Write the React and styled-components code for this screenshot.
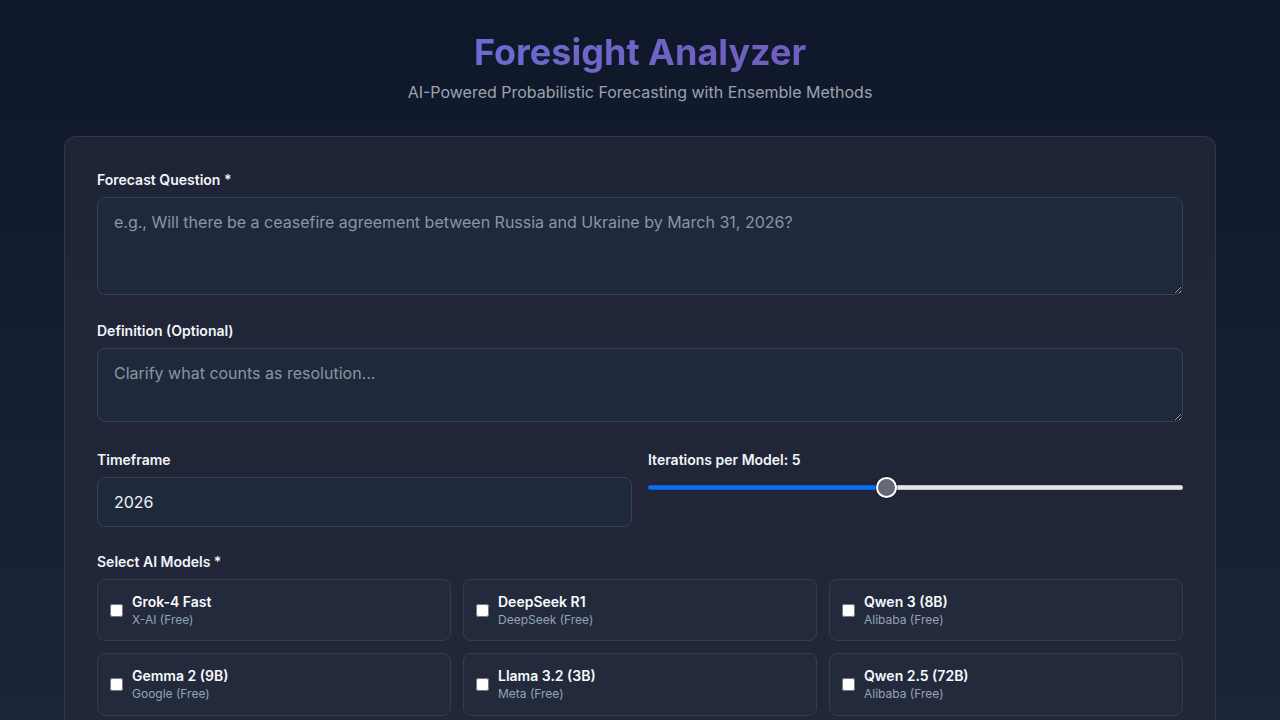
import React, { useState } from "react";
import styled, { createGlobalStyle } from "styled-components";

const GlobalStyle = createGlobalStyle`
  * { box-sizing: border-box; }
  body {
    margin: 0;
    font-family: Inter, "Noto Sans", sans-serif;
    background: linear-gradient(180deg, #0f172a 0%, #1b253a 100%) fixed;
    color: #e2e8f0;
    min-height: 100vh;
  }
`;

const MODELS = [
  { id: "grok", name: "Grok-4 Fast", vendor: "X-AI (Free)" },
  { id: "deepseek", name: "DeepSeek R1", vendor: "DeepSeek (Free)" },
  { id: "qwen3", name: "Qwen 3 (8B)", vendor: "Alibaba (Free)" },
  { id: "gemma", name: "Gemma 2 (9B)", vendor: "Google (Free)" },
  { id: "llama", name: "Llama 3.2 (3B)", vendor: "Meta (Free)" },
  { id: "qwen25", name: "Qwen 2.5 (72B)", vendor: "Alibaba (Free)" },
];

const App = () => {
  const [iterations, setIterations] = useState(5);
  const [timeframe, setTimeframe] = useState("2026");
  const [selected, setSelected] = useState([]);

  const fill = ((iterations - 1) / 9) * 100;

  const toggle = (id) =>
    setSelected((s) => (s.includes(id) ? s.filter((x) => x !== id) : [...s, id]));

  return (
    <>
      <GlobalStyle />
      <Page>
        <Header>
          <Title>Foresight Analyzer</Title>
          <Subtitle>AI-Powered Probabilistic Forecasting with Ensemble Methods</Subtitle>
        </Header>

        <Card>
          <Field $space={26}>
            <Label>Forecast Question *</Label>
            <TextArea
              rows={3}
              placeholder="e.g., Will there be a ceasefire agreement between Russia and Ukraine by March 31, 2026?"
            />
          </Field>

          <Field $space={28}>
            <Label>Definition (Optional)</Label>
            <TextArea rows={2} placeholder="Clarify what counts as resolution..." />
          </Field>

          <TwoCol>
            <div>
              <Label>Timeframe</Label>
              <Input value={timeframe} onChange={(e) => setTimeframe(e.target.value)} />
            </div>
            <div>
              <Label>Iterations per Model: {iterations}</Label>
              <Range
                type="range"
                min={1}
                max={10}
                value={iterations}
                onChange={(e) => setIterations(Number(e.target.value))}
                style={{
                  background: `linear-gradient(90deg, #0a72f0 0%, #0a72f0 ${fill}%, #e6e6e8 ${fill}%, #e6e6e8 100%)`,
                }}
              />
            </div>
          </TwoCol>

          <Field>
            <Label>Select AI Models *</Label>
            <ModelGrid>
              {MODELS.map((m) => (
                <ModelCard key={m.id}>
                  <CheckBox
                    type="checkbox"
                    checked={selected.includes(m.id)}
                    onChange={() => toggle(m.id)}
                  />
                  <ModelText>
                    <ModelName>{m.name}</ModelName>
                    <ModelVendor>{m.vendor}</ModelVendor>
                  </ModelText>
                </ModelCard>
              ))}
            </ModelGrid>
          </Field>

          <SubmitButton>Run Forecast</SubmitButton>
        </Card>
      </Page>
    </>
  );
};

const Page = styled.div`
  max-width: 1152px;
  margin: 0 auto;
  padding: 31px 0 40px;
`;

const Header = styled.header`
  text-align: center;
  margin-bottom: 32px;
`;

const Title = styled.h1`
  margin: 0 0 6px;
  font-size: 36px;
  line-height: 43px;
  font-weight: 700;
  background: linear-gradient(135deg, #667eea 0%, #764ba2 100%);
  -webkit-background-clip: text;
  background-clip: text;
  color: transparent;
`;

const Subtitle = styled.p`
  margin: 0;
  font-size: 16px;
  line-height: 24px;
  color: #9ca3af;
`;

const Card = styled.div`
  background: rgba(36, 40, 58, 0.75);
  border: 1px solid #323a4c;
  border-radius: 12px;
  padding: 33px 32px 32px;
`;

const Field = styled.div`
  margin-bottom: ${(p) => p.$space || 25}px;
`;

const Label = styled.label`
  display: block;
  font-size: 14px;
  line-height: 20px;
  font-weight: 600;
  color: #f1f5f9;
  margin-bottom: 7px;
`;

const TextArea = styled.textarea`
  display: block;
  width: 100%;
  padding: 12px 16px;
  font-family: Inter, "Noto Sans", sans-serif;
  font-size: 16px;
  line-height: 24px;
  color: #e2e8f0;
  background: #1e293b;
  border: 1px solid #364152;
  border-radius: 8px;
  resize: vertical;
  outline: none;

  &::placeholder {
    color: #8b95a5;
  }
`;

const Input = styled.input`
  display: block;
  width: 100%;
  padding: 12px 16px;
  font-family: Inter, "Noto Sans", sans-serif;
  font-size: 16px;
  line-height: 24px;
  color: #f1f5f9;
  background: #1e293b;
  border: 1px solid #364152;
  border-radius: 8px;
  outline: none;
`;

const TwoCol = styled.div`
  display: grid;
  grid-template-columns: 1fr 1fr;
  gap: 16px;
  margin-bottom: 25px;
`;

const Range = styled.input`
  -webkit-appearance: none;
  appearance: none;
  display: block;
  width: 100%;
  height: 5px;
  margin: 15px 0 0;
  border-radius: 3px;
  box-shadow: inset 0 0 0 1px rgba(0, 0, 0, 0.15);
  outline: none;

  &::-webkit-slider-thumb {
    -webkit-appearance: none;
    width: 21px;
    height: 21px;
    border-radius: 50%;
    background: #676876;
    border: 2px solid #ffffff;
    box-shadow: 0 0 0 1px rgba(0, 0, 0, 0.3);
    cursor: pointer;
  }
`;

const ModelGrid = styled.div`
  display: grid;
  grid-template-columns: repeat(3, 1fr);
  gap: 12px;
`;

const ModelCard = styled.label`
  display: flex;
  align-items: center;
  gap: 9px;
  padding: 12px;
  background: #222a3c;
  border: 1px solid #343c4e;
  border-radius: 8px;
  cursor: pointer;
`;

const CheckBox = styled.input`
  width: 13px;
  height: 13px;
  margin: 0;
  flex-shrink: 0;
`;

const ModelText = styled.div`
  display: flex;
  flex-direction: column;
`;

const ModelName = styled.span`
  font-size: 14px;
  line-height: 1.4;
  font-weight: 600;
  color: #f8fafc;
`;

const ModelVendor = styled.span`
  font-size: 12px;
  line-height: 1.4;
  color: #94a3b8;
`;

const SubmitButton = styled.button`
  width: 100%;
  padding: 14px;
  border: none;
  border-radius: 8px;
  font-family: Inter, "Noto Sans", sans-serif;
  font-size: 16px;
  font-weight: 600;
  color: #ffffff;
  background: linear-gradient(135deg, #667eea 0%, #764ba2 100%);
  cursor: pointer;
`;

export default App;
